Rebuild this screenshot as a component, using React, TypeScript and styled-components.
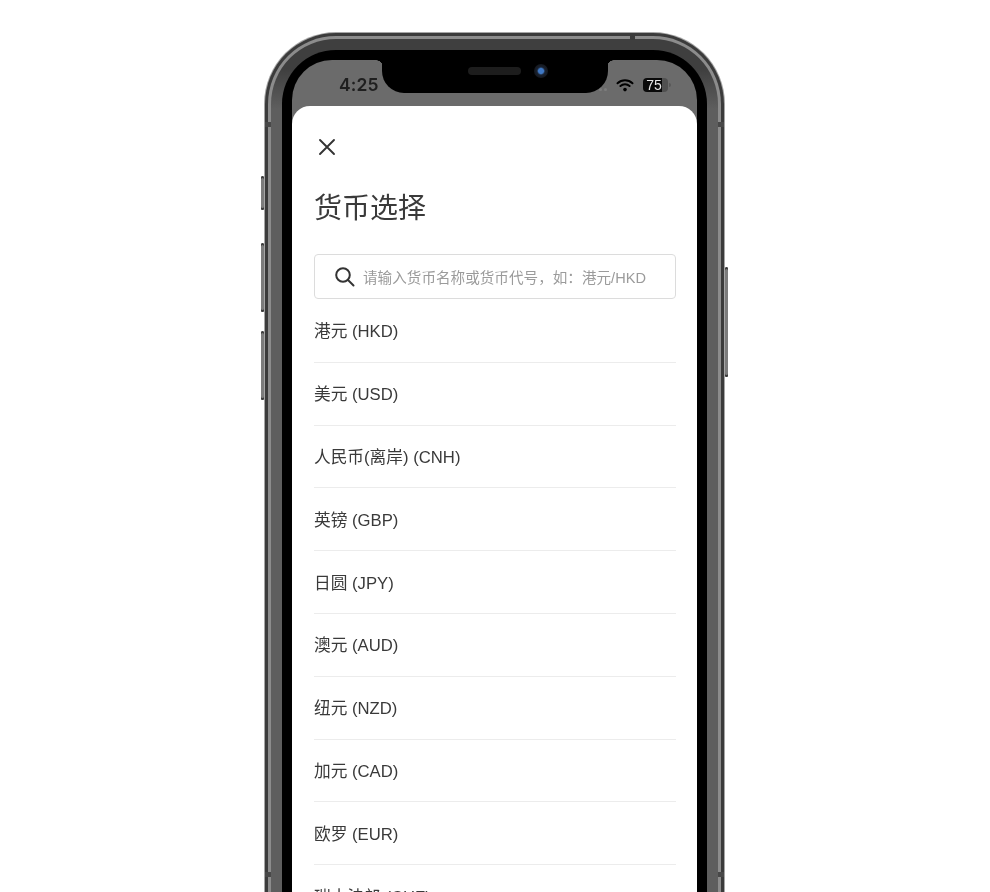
import React from "react";
import styled, { createGlobalStyle } from "styled-components";

const Global = createGlobalStyle`
  html, body { margin: 0; padding: 0; background: #fff; }
  body { font-family: "Liberation Sans", "Noto Sans CJK SC", sans-serif; }
`;

const Stage = styled.main`
  height: 892px;
  overflow: hidden;
  padding: 32px 0 0 264px;
  box-sizing: border-box;
`;

const Phone = styled.div`
  position: relative;
  width: 461px;
  height: 1000px;
  filter: blur(0.35px);
`;

const ButtonRail = styled.div<{ $side: "left" | "right"; $top: number }>`
  position: absolute;
  ${(p) => p.$side}: -3px;
  top: ${(p) => p.$top}px;
  width: 3px;
  display: flex;
  flex-direction: column;
  gap: 19px;
  &:first-of-type > span:first-child {
    margin-bottom: 14px;
  }
`;

const SideButton = styled.span<{ $height: number }>`
  display: block;
  height: ${(p) => p.$height}px;
  background: #7c7c7c;
  border-radius: 2px;
  box-shadow: inset 0 2px 0 #3a3a3a, inset 0 -2px 0 #3a3a3a;
`;

const BandRow = styled.div<{ $top: number }>`
  position: absolute;
  z-index: 1;
  top: ${(p) => p.$top}px;
  left: 1px;
  right: 1px;
  display: flex;
  justify-content: space-between;
`;

const Band = styled.span`
  width: 6px;
  height: 5px;
  background: #484848;
`;

const TopBand = styled.span`
  position: absolute;
  z-index: 1;
  top: 1px;
  left: 366px;
  width: 5px;
  height: 7px;
  background: #3a3a3a;
`;

const Ring = styled.div<{ $pad: number; $radius: number; $color: string }>`
  height: 100%;
  box-sizing: border-box;
  padding: ${(p) => p.$pad}px;
  border-radius: ${(p) => p.$radius}px;
  background: ${(p) => p.$color};
`;

const Screen = styled.div`
  position: relative;
  height: 100%;
  display: flex;
  flex-direction: column;
  overflow: hidden;
  border-radius: 40px 40px 0 0;
  background: #6b6b6b;
`;

const StatusBar = styled.div`
  flex: none;
  height: 46px;
  box-sizing: border-box;
  display: flex;
  align-items: flex-start;
  justify-content: space-between;
  padding: 14px 29px 0 47px;
`;

const Time = styled.span`
  font-family: Inter, "Liberation Sans", sans-serif;
  font-size: 17.5px;
  line-height: 21px;
  font-weight: 600;
  letter-spacing: 0.1px;
  color: #1f1f1f;
`;

const StatusIcons = styled.div`
  display: flex;
  align-items: center;
  height: 20px;
  margin-top: 1px;
`;

const Dots = styled.span`
  display: flex;
  gap: 2px;
  margin: 9px 9px 0 0;
  & > i {
    width: 3px;
    height: 3px;
    border-radius: 50%;
    background: #7d7d7d;
  }
`;

const Battery = styled.span`
  position: relative;
  margin-left: 9px;
  width: 25px;
  height: 14px;
  padding-right: 3px;
  box-sizing: border-box;
  border-radius: 4px;
  background: linear-gradient(to right, #0a0a0a 76%, #505050 76%);
  color: #e8e8e8;
  font-family: "Liberation Sans", sans-serif;
  font-size: 14px;
  line-height: 14px;
  text-align: center;
  &::after {
    content: "";
    position: absolute;
    right: -3px;
    top: 5px;
    width: 2px;
    height: 4px;
    border-radius: 0 2px 2px 0;
    background: #585858;
  }
`;

const Notch = styled.div`
  position: absolute;
  top: 0;
  left: 90px;
  width: 226px;
  height: 33px;
  box-sizing: border-box;
  display: flex;
  align-items: center;
  gap: 13px;
  padding: 0 0 11px 86px;
  background: #000;
  border-radius: 0 0 22px 22px;
  &::before,
  &::after {
    content: "";
    position: absolute;
    top: 0;
    width: 7px;
    height: 7px;
  }
  &::before {
    left: -6px;
    background: radial-gradient(circle at 0 100%, transparent 6.5px, #000 7px);
  }
  &::after {
    right: -6px;
    background: radial-gradient(circle at 100% 100%, transparent 6.5px, #000 7px);
  }
`;

const Speaker = styled.span`
  width: 53px;
  height: 8px;
  border-radius: 4px;
  background: #1d1d1d;
`;

const Camera = styled.span`
  width: 14px;
  height: 14px;
  border-radius: 50%;
  background: radial-gradient(circle, #3f78c4 0 2.5px, #1a2230 4px, #14171d 7px);
`;

const Sheet = styled.section`
  flex: 1;
  background: #fff;
  border-radius: 18px 18px 0 0;
  padding: 0 21px 0 22px;
`;

const CloseButton = styled.button`
  display: block;
  border: 0;
  background: none;
  padding: 0;
  margin: 31px 0 0 3px;
  width: 20px;
  height: 20px;
  color: #333;
`;

const Title = styled.h1`
  margin: 32px 0 0;
  font-size: 28px;
  line-height: 40px;
  font-weight: 400;
  color: #3a3a3a;
`;

const SearchBox = styled.div`
  margin-top: 25px;
  height: 45px;
  box-sizing: border-box;
  display: flex;
  align-items: center;
  gap: 8px;
  padding-left: 19px;
  border: 1px solid #dcdcdc;
  border-radius: 4px;
  color: #333;
`;

const Placeholder = styled.span`
  font-size: 14.6px;
  color: #9b9b9b;
  white-space: nowrap;
`;

const List = styled.ul`
  list-style: none;
  margin: 0;
  padding: 1px 0 0;
`;

const Row = styled.li`
  height: 62.8px;
  box-sizing: border-box;
  display: flex;
  align-items: center;
  padding-bottom: 1px;
  border-bottom: 1px solid #ececec;
  font-size: 16.7px;
  color: #3a3a3a;
`;

const currencies = [
  "港元 (HKD)",
  "美元 (USD)",
  "人民币(离岸) (CNH)",
  "英镑 (GBP)",
  "日圆 (JPY)",
  "澳元 (AUD)",
  "纽元 (NZD)",
  "加元 (CAD)",
  "欧罗 (EUR)",
  "瑞士法郎 (CHF)",
];

export default function App() {
  return (
    <>
      <Global />
      <Stage>
        <Phone>
          <ButtonRail $side="left" $top={144}>
            <SideButton $height={34} />
            <SideButton $height={69} />
            <SideButton $height={69} />
          </ButtonRail>
          <ButtonRail $side="right" $top={235}>
            <SideButton $height={110} />
          </ButtonRail>
          <BandRow $top={90}>
            <Band />
            <Band />
          </BandRow>
          <BandRow $top={840}>
            <Band />
            <Band />
          </BandRow>
          <TopBand />
          <Ring $pad={1} $radius={72} $color="#a6a6a6">
            <Ring $pad={3} $radius={71} $color="#3b3b3b">
              <Ring $pad={3} $radius={68} $color="#8c8c8c">
                <Ring $pad={11} $radius={65} $color="linear-gradient(to bottom, #3f3f3f 0, #3f3f3f 30px, #5e5e5e 70px)">
                  <Ring $pad={10} $radius={54} $color="#000">
                    <Screen>
                      <StatusBar>
                        <Time>4:25</Time>
                        <StatusIcons>
                          <Dots>
                            <i />
                            <i />
                          </Dots>
                          <svg width="18" height="14" viewBox="0 0 18 14" fill="none" stroke="#000" strokeLinecap="round">
                            <path d="M1.5 5.2C5.8 1.2 12.2 1.2 16.5 5.2" strokeWidth="2" />
                            <path d="M4.4 8C7 5.6 11 5.6 13.6 8" strokeWidth="2" />
                            <circle cx="9" cy="11.6" r="1.8" fill="#000" stroke="none" />
                          </svg>
                          <Battery>75</Battery>
                        </StatusIcons>
                      </StatusBar>
                      <Notch>
                        <Speaker />
                        <Camera />
                      </Notch>
                      <Sheet>
                        <CloseButton aria-label="关闭">
                          <svg width="20" height="20" viewBox="0 0 20 20" stroke="currentColor" strokeWidth="1.9" strokeLinecap="round">
                            <path d="M3 3L17 17M17 3L3 17" />
                          </svg>
                        </CloseButton>
                        <Title>货币选择</Title>
                        <SearchBox>
                          <svg width="21" height="21" viewBox="0 0 21 21" fill="none" stroke="currentColor" strokeWidth="2" strokeLinecap="round">
                            <circle cx="9" cy="9" r="6.8" />
                            <path d="M14 14L19.5 19.5" />
                          </svg>
                          <Placeholder>请输入货币名称或货币代号，如：港元/HKD</Placeholder>
                        </SearchBox>
                        <List>
                          {currencies.map((c) => (
                            <Row key={c}>{c}</Row>
                          ))}
                        </List>
                      </Sheet>
                    </Screen>
                  </Ring>
                </Ring>
              </Ring>
            </Ring>
          </Ring>
        </Phone>
      </Stage>
    </>
  );
}
